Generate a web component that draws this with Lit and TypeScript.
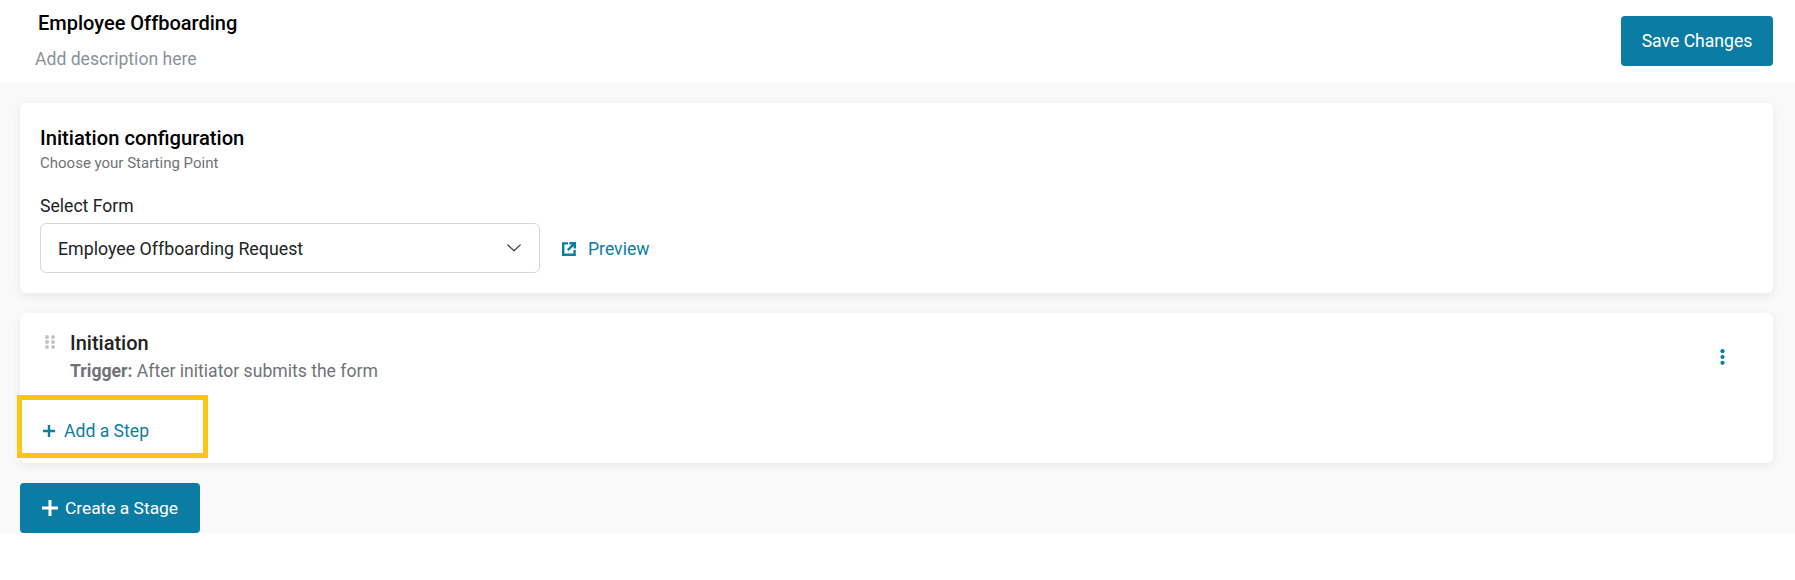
import { LitElement, html, css } from "lit";
import { customElement } from "lit/decorators.js";

@customElement("app-root")
export class AppRoot extends LitElement {
  static styles = css`
    :host {
      display: block;
      font-family: Roboto, "Liberation Sans", sans-serif;
      background: #fff;
      height: 580px;
      color: #000;
    }
    .header {
      height: 83px;
      box-sizing: border-box;
      display: flex;
      justify-content: space-between;
      align-items: flex-start;
      padding: 11px 22px 0 35px;
      background: #fff;
    }
    .title { font-size: 20px; font-weight: 500; line-height: 24px; margin-left: 3px; }
    .desc { font-size: 17.6px; line-height: 20px; color: #8a9299; margin-top: 14px; }
    .btn {
      background: #0b7da5;
      color: #fff;
      border: none;
      border-radius: 4px;
      font: 400 17.6px Roboto, sans-serif;
      height: 50px;
      box-sizing: border-box;
      display: flex;
      align-items: center;
      justify-content: center;
    }
    .save { width: 152px; margin-top: 5px; }
    .main {
      background: #f9f9f9;
      height: 450px;
      box-sizing: border-box;
      padding: 20px 22px 0 20px;
      display: flex;
      flex-direction: column;
    }
    .card {
      background: #fff;
      border-radius: 6px;
      box-shadow: 0 3px 10px rgba(0, 0, 0, 0.07);
      box-sizing: border-box;
    }
    .config { height: 190px; padding: 23px 20px; }
    .config h2 { margin: 0; font-size: 20.2px; font-weight: 500; line-height: 24px; }
    .sub { font-size: 15px; color: #6f7377; line-height: 18px; margin-top: 4px; }
    .label { font-size: 17.6px; line-height: 20px; color: #222; margin-top: 24px; }
    .row { display: flex; align-items: center; margin-top: 7px; }
    .select {
      width: 500px;
      height: 50px;
      box-sizing: border-box;
      border: 1px solid #d8d8d8;
      border-radius: 6px;
      display: flex;
      align-items: center;
      justify-content: space-between;
      padding: 0 18px 0 17px;
      font-size: 17.8px;
      color: #212529;
    }
    .preview { display: flex; align-items: center; gap: 12px; margin-left: 22px; padding-top: 2px; color: #0b7da5; font-size: 17.6px; }
    .stage { height: 150px; margin-top: 20px; position: relative; padding: 18px 0 0 25px; display: flex; flex-direction: column; }
    .top { display: flex; gap: 15px; padding-right: 48px; align-items: flex-start; }
    .grip { margin-top: 4px; flex: none; }
    .stage h3 { margin: 0; font-size: 20px; font-weight: 500; line-height: 24px; color: #222; }
    .trigger { font-size: 17.6px; line-height: 20px; color: #6f7377; margin-top: 6px; }
    .trigger b { font-weight: 700; }
    .text { flex: 1; }
    .kebab { margin-top: 18px; flex: none; }
    .add {
      display: flex;
      align-items: center;
      gap: 9px;
      margin-top: 38px;
      margin-left: -2px;
      color: #0b7da5;
      font-size: 17.6px;
      line-height: 24px;
    }
    .highlight {
      position: absolute;
      left: -3px;
      top: 82px;
      width: 191px;
      height: 63px;
      box-sizing: border-box;
      border: 5px solid #fec60f;
    }
    .create { width: 180px; margin-top: 20px; gap: 7px; font-size: 17.4px; }
  `;

  render() {
    return html`
      <div class="header">
        <div>
          <div class="title">Employee Offboarding</div>
          <div class="desc">Add description here</div>
        </div>
        <button class="btn save">Save Changes</button>
      </div>
      <div class="main">
        <section class="card config">
          <h2>Initiation configuration</h2>
          <div class="sub">Choose your Starting Point</div>
          <div class="label">Select Form</div>
          <div class="row">
            <div class="select">
              <span>Employee Offboarding Request</span>
              <svg width="14" height="8" viewBox="0 0 14 8" fill="none" stroke="#343a40" stroke-width="1.2" stroke-linecap="round" stroke-linejoin="round"><path d="M0.7 0.9L7 6.8l6.3-5.9" /></svg>
            </div>
            <div class="preview">
              <svg width="14" height="14" viewBox="0 0 14 14" fill="none" stroke="#0b7da5" stroke-width="2.4"><path d="M6 1.4H1.2v11.4h11.4V8" /><path d="M7.4 1.2H12.8v5.4M12.4 1.6L5.8 8.2" /></svg>
              <span>Preview</span>
            </div>
          </div>
        </section>
        <section class="card stage">
          <div class="top">
            <svg class="grip" width="10" height="14" viewBox="0 0 10 14" fill="#c4c4c4"><circle cx="2" cy="2" r="2"/><circle cx="8" cy="2" r="2"/><circle cx="2" cy="7" r="2"/><circle cx="8" cy="7" r="2"/><circle cx="2" cy="12" r="2"/><circle cx="8" cy="12" r="2"/></svg>
            <div class="text">
              <h3>Initiation</h3>
              <div class="trigger"><b>Trigger:</b> After initiator submits the form</div>
            </div>
            <svg class="kebab" width="5" height="16" viewBox="0 0 5 16" fill="#0b7da5"><circle cx="2.5" cy="2.2" r="2.1"/><circle cx="2.5" cy="8" r="2.1"/><circle cx="2.5" cy="13.8" r="2.1"/></svg>
          </div>
          <div class="add">
            <svg width="12" height="12" viewBox="0 0 12 12" stroke="#0b7da5" stroke-width="2.4"><path d="M6 0v12M0 6h12" /></svg>
            <span>Add a Step</span>
          </div>
          <div class="highlight"></div>
        </section>
        <button class="btn create">
          <svg width="16" height="16" viewBox="0 0 16 16" stroke="#fff" stroke-width="3"><path d="M8 0v16M0 8h16" /></svg>
          <span>Create a Stage</span>
        </button>
      </div>
    `;
  }
}
